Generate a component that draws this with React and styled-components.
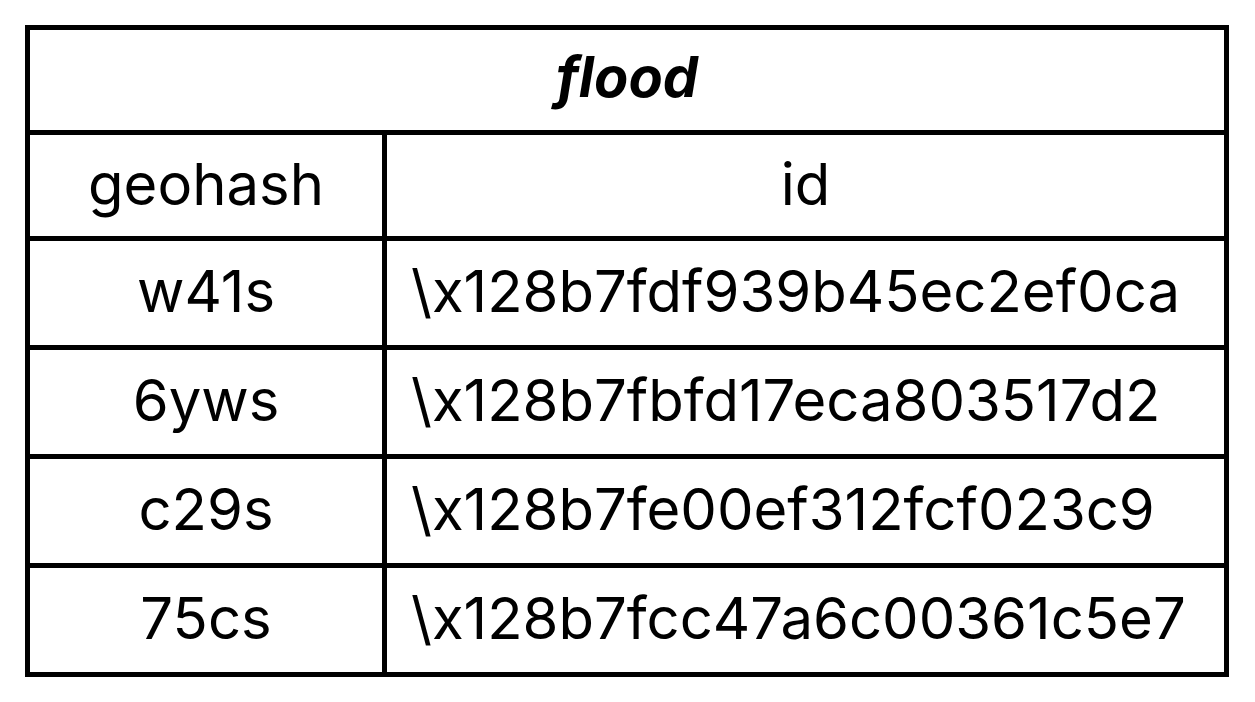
import React from 'react';
import styled, { createGlobalStyle } from 'styled-components';

const GlobalStyle = createGlobalStyle`
  html, body {
    margin: 0;
    padding: 0;
    background: #fff;
  }
  body {
    font-family: Inter, "Noto Sans", sans-serif;
    color: #000;
  }
`;

const rows = [
  { geohash: 'w41s', id: '\\x128b7fdf939b45ec2ef0ca' },
  { geohash: '6yws', id: '\\x128b7fbfd17eca803517d2' },
  { geohash: 'c29s', id: '\\x128b7fe00ef312fcf023c9' },
  { geohash: '75cs', id: '\\x128b7fcc47a6c00361c5e7' },
];

const Page = styled.div`
  padding: 25px;
`;

const Table = styled.table`
  border-collapse: separate;
  border-spacing: 0;
  border: 5px solid #000;
  width: 1204px;
  table-layout: fixed;
`;

const Cell = styled.td`
  box-sizing: border-box;
  padding: 0 0 4px ${({ left }) => (left ? '24px' : '0')};
  text-align: ${({ left }) => (left ? 'left' : 'center')};
  font-size: 58px;
  line-height: 1;
  font-weight: 400;
  height: ${({ h }) => h}px;
  border-top: ${({ first }) => (first ? 'none' : '5px solid #000')};
  border-left: ${({ edge }) => (edge ? 'none' : '5px solid #000')};
  white-space: nowrap;
`;

const Title = styled(Cell)`
  font-size: 56px;
  font-weight: 700;
  font-style: italic;
  padding-bottom: 6px;
`;

export default function App() {
  return (
    <Page>
      <GlobalStyle />
      <Table>
        <colgroup>
          <col style={{ width: 352 }} />
          <col />
        </colgroup>
        <tbody>
          <tr>
            <Title colSpan={2} first edge h={100}>flood</Title>
          </tr>
          <tr>
            <Cell edge h={106}>geohash</Cell>
            <Cell h={106}>id</Cell>
          </tr>
          {rows.map((r) => (
            <tr key={r.geohash}>
              <Cell edge h={109}>{r.geohash}</Cell>
              <Cell left h={109}>{r.id}</Cell>
            </tr>
          ))}
        </tbody>
      </Table>
    </Page>
  );
}
